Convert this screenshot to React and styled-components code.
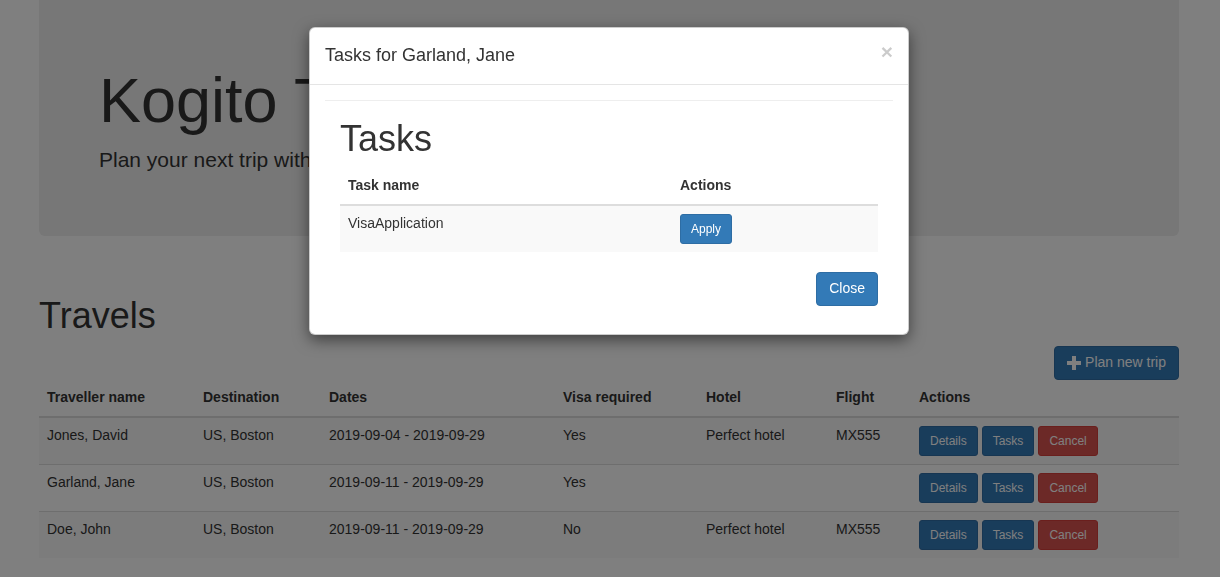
import React from 'react'
import styled, { createGlobalStyle, css } from 'styled-components'

const GlobalStyle = createGlobalStyle`
    * {
        box-sizing: border-box;
    }

    body {
        margin: 0;
        background: #fff;
        color: #333;
        font-family: "Liberation Sans", Helvetica, Arial, sans-serif;
        font-size: 14px;
        line-height: 1.428571;
    }
`

const Page = styled.div`
    width: 1140px;
    margin: 0 0 0 39px;
`

const Jumbotron = styled.div`
    padding: 46px 60px;
    margin-bottom: 30px;
    background-color: #eee;
    border-radius: 0 0 6px 6px;
`

const JumboTitle = styled.h1`
    margin: 20px 0 10px;
    font-size: 63px;
    font-weight: 500;
    line-height: 1.1;
    white-space: nowrap;
`

const Lead = styled.p`
    margin: 0 0 15px;
    font-size: 21px;
    font-weight: 200;
`

const Heading = styled.h1`
    margin: ${props => props.top}px 0 10px;
    font-size: 36px;
    font-weight: 500;
    line-height: 1.1;
`

const Toolbar = styled.div`
    display: flex;
    justify-content: flex-end;
`

const sizes = {
    sm: css`
        padding: 5px 10px;
        font-size: 12px;
        line-height: 1.5;
        border-radius: 3px;
    `,
    md: css`
        padding: 6px 12px;
        font-size: 14px;
        line-height: 1.428571;
        border-radius: 4px;
    `
}

const variants = {
    primary: css`
        background-color: #337ab7;
        border-color: #2e6da4;
    `,
    danger: css`
        background-color: #d9534f;
        border-color: #d43f3a;
    `
}

const Button = styled.button`
    display: inline-flex;
    align-items: center;
    gap: 4px;
    margin: 0;
    border: 1px solid transparent;
    color: #fff;
    font-family: inherit;
    white-space: nowrap;
    cursor: pointer;
    ${props => sizes[props.size || 'md']}
    ${props => variants[props.variant || 'primary']}
`

const ButtonGroup = styled.div`
    display: flex;
    gap: 4px;
`

const Table = styled.table`
    width: 100%;
    margin-bottom: ${props => props.bottom}px;
    border-collapse: collapse;
    border-spacing: 0;
    table-layout: fixed;

    tbody tr:nth-of-type(odd) {
        background-color: #f9f9f9;
    }
`

const HeaderCell = styled.th`
    padding: 8px;
    text-align: left;
    vertical-align: bottom;
    font-weight: bold;
    border-bottom: 2px solid #ddd;
`

const DataCell = styled.td`
    padding: 8px;
    text-align: left;
    vertical-align: top;
    border-top: 1px solid #ddd;
`

const Backdrop = styled.div`
    position: fixed;
    inset: 0;
    background-color: rgba(0, 0, 0, 0.5);
`

const ModalLayer = styled.div`
    position: fixed;
    inset: 0;
    display: flex;
    justify-content: center;
    align-items: flex-start;
`

const Dialog = styled.div`
    width: 600px;
    margin: 27px 0 0 -2px;
    background-color: #fff;
    border: 1px solid rgba(0, 0, 0, 0.2);
    border-radius: 6px;
    box-shadow: 0 5px 15px rgba(0, 0, 0, 0.5);
`

const ModalHeader = styled.div`
    display: flex;
    justify-content: space-between;
    align-items: flex-start;
    padding: 15px;
    border-bottom: 1px solid #e5e5e5;
`

const ModalTitle = styled.h4`
    margin: 0;
    font-size: 18px;
    font-weight: 500;
    line-height: 1.428571;
`

const CloseX = styled.button`
    margin-top: -2px;
    padding: 0;
    border: 0;
    background: transparent;
    color: #000;
    opacity: 0.2;
    font-family: inherit;
    font-size: 21px;
    font-weight: bold;
    line-height: 1;
    text-shadow: 0 1px 0 #fff;
    cursor: pointer;
`

const ModalBody = styled.div`
    padding: 15px;
`

const Rule = styled.hr`
    margin: 0 0 18px;
    border: 0;
    border-top: 1px solid #eee;
`

const ModalInner = styled.div`
    padding: 0 15px 13px;
`

const Footer = styled.div`
    display: flex;
    justify-content: flex-end;
`

const PlusIcon = () => (
    <svg width="14" height="14" viewBox="0 0 14 14" aria-hidden="true">
        <path d="M5 0h4v5h5v4H9v5H5V9H0V5h5z" fill="currentColor" />
    </svg>
)

const travels = [
    { name: 'Jones, David', destination: 'US, Boston', dates: '2019-09-04 - 2019-09-29', visa: 'Yes', hotel: 'Perfect hotel', flight: 'MX555' },
    { name: 'Garland, Jane', destination: 'US, Boston', dates: '2019-09-11 - 2019-09-29', visa: 'Yes', hotel: '', flight: '' },
    { name: 'Doe, John', destination: 'US, Boston', dates: '2019-09-11 - 2019-09-29', visa: 'No', hotel: 'Perfect hotel', flight: 'MX555' }
]

const columns = [
    { title: 'Traveller name', width: 156 },
    { title: 'Destination', width: 126 },
    { title: 'Dates', width: 234 },
    { title: 'Visa required', width: 143 },
    { title: 'Hotel', width: 130 },
    { title: 'Flight', width: 83 },
    { title: 'Actions' }
]

const tasks = [{ name: 'VisaApplication' }]

const TravelsTable = () => (
    <Table bottom={20}>
        <colgroup>
            {columns.map(col => (
                <col key={col.title} style={col.width ? { width: col.width } : undefined} />
            ))}
        </colgroup>
        <thead>
            <tr>
                {columns.map(col => (
                    <HeaderCell key={col.title}>{col.title}</HeaderCell>
                ))}
            </tr>
        </thead>
        <tbody>
            {travels.map(travel => (
                <tr key={travel.name}>
                    <DataCell>{travel.name}</DataCell>
                    <DataCell>{travel.destination}</DataCell>
                    <DataCell>{travel.dates}</DataCell>
                    <DataCell>{travel.visa}</DataCell>
                    <DataCell>{travel.hotel}</DataCell>
                    <DataCell>{travel.flight}</DataCell>
                    <DataCell>
                        <ButtonGroup>
                            <Button size="sm">Details</Button>
                            <Button size="sm">Tasks</Button>
                            <Button size="sm" variant="danger">Cancel</Button>
                        </ButtonGroup>
                    </DataCell>
                </tr>
            ))}
        </tbody>
    </Table>
)

const TasksModal = () => (
    <ModalLayer>
        <Dialog>
            <ModalHeader>
                <ModalTitle>Tasks for Garland, Jane</ModalTitle>
                <CloseX aria-label="Close">×</CloseX>
            </ModalHeader>
            <ModalBody>
                <Rule />
                <ModalInner>
                    <Heading top={0}>Tasks</Heading>
                    <Table bottom={20}>
                        <colgroup>
                            <col style={{ width: 332 }} />
                            <col />
                        </colgroup>
                        <thead>
                            <tr>
                                <HeaderCell>Task name</HeaderCell>
                                <HeaderCell>Actions</HeaderCell>
                            </tr>
                        </thead>
                        <tbody>
                            {tasks.map(task => (
                                <tr key={task.name}>
                                    <DataCell>{task.name}</DataCell>
                                    <DataCell>
                                        <Button size="sm">Apply</Button>
                                    </DataCell>
                                </tr>
                            ))}
                        </tbody>
                    </Table>
                    <Footer>
                        <Button>Close</Button>
                    </Footer>
                </ModalInner>
            </ModalBody>
        </Dialog>
    </ModalLayer>
)

export default function App() {
    return (
        <>
            <GlobalStyle />
            <Page>
                <Jumbotron>
                    <JumboTitle>Kogito Travel Agency</JumboTitle>
                    <Lead>Plan your next trip with Kogito Travel Agency</Lead>
                </Jumbotron>
                <Heading top={60}>Travels</Heading>
                <Toolbar>
                    <Button>
                        <PlusIcon />
                        Plan new trip
                    </Button>
                </Toolbar>
                <TravelsTable />
            </Page>
            <Backdrop />
            <TasksModal />
        </>
    )
}
